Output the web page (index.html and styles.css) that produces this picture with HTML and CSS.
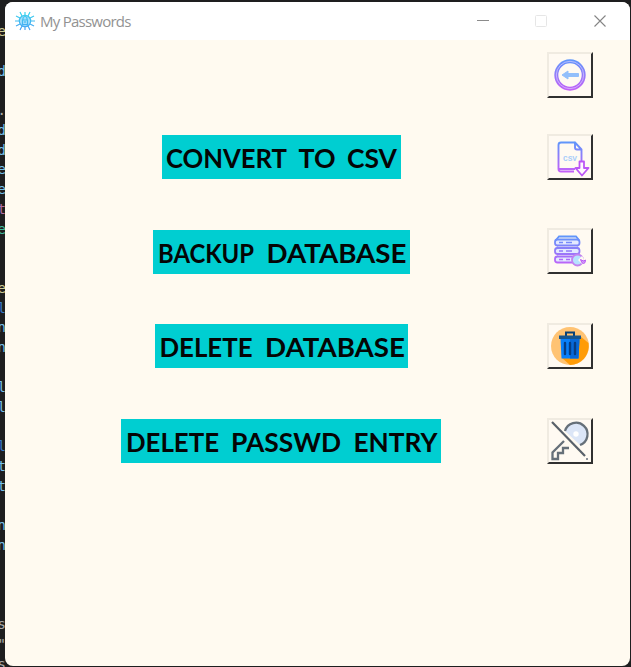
FILE: index.html
```html
<!DOCTYPE html>
<html lang="en">
<head>
<meta charset="utf-8">
<title>My Passwords</title>
<link rel="stylesheet" href="styles.css">
</head>
<body>
<pre class="code" aria-hidden="true"><i class="y">e</i>

<i>d</i>

<b>.</b>
<i>d</i>
<i>d</i>
<i>e</i>
<i>e</i>
<i class="p">t</i>
<i class="g">e</i>


<i class="y">e</i>
<i class="b">l</i>
<i>n</i>
<i>n</i>

<i>l</i>
<i>l</i>

<i class="b">l</i>
<i>t</i>
<i>t</i>

<i>n</i>
<i>n</i>



<b>s</b>
<b>"</b>
<b>s</b></pre>
<main class="window">
  <header class="titlebar">
    <svg class="app-icon" width="20" height="20" viewBox="0 0 20 20" fill="none" stroke="url(#sky)" stroke-width="1.2">
      <defs><linearGradient id="sky" x1="0" y1="0" x2="0" y2="20" gradientUnits="userSpaceOnUse"><stop stop-color="#39d9ec"/><stop offset="1" stop-color="#4b9df5"/></linearGradient></defs>
      <circle cx="10" cy="10" r="5.7" fill="#a5defc"/>
      <path d="M10 4V1M7 5 5 1M13 5l2-4M5 7 1 5M15 7l4-2M4 10H0M16 10h4M5 13l-4 2M15 13l4 2M7 15l-2 4M13 15l2 4M10 16v3"/>
      <path d="M8 9V7.500a2 2 0 0 1 4 0V9M7.500 9h5v4.500h-5zM10 10v2"/>
    </svg>
    <span class="title">My Passwords</span>
    <svg class="controls" width="132" height="14" viewBox="0 0 132 14" fill="none">
      <path d="M0 6.500h12" stroke="#8b8b8b"/>
      <rect x="58.500" y="1.500" width="11" height="11" rx="1" stroke="#e6e6e6"/>
      <path d="m117.500 1.500 11 11m0-11-11 11" stroke="#858585" stroke-width="1.100"/>
    </svg>
  </header>
  <section class="content">
    <div class="row first">
      <button class="tool" aria-label="Back">
        <svg viewBox="0 0 46 46" fill="none">
          <defs><linearGradient id="violet" x1="0" y1="7" x2="0" y2="40" gradientUnits="userSpaceOnUse"><stop stop-color="#5c98fb"/><stop offset="1" stop-color="#cb5cf8"/></linearGradient></defs>
          <circle cx="23" cy="23" r="13.700" stroke="url(#violet)" stroke-width="4"/>
          <circle cx="23" cy="23" r="13.700" stroke="#dccfff" stroke-opacity=".7" stroke-width="1"/>
          <path d="m15 23 6-4v2.500h10.500v3H21V27z" fill="#92bffb" stroke="#92bffb" stroke-linejoin="round"/>
        </svg>
      </button>
    </div>
    <div class="row">
      <div class="label convert"><svg width="239" height="44"><text x="4" y="33" textLength="121" lengthAdjust="spacingAndGlyphs">CONVERT</text><text x="136.500" y="33" textLength="37" lengthAdjust="spacingAndGlyphs">TO</text><text x="185" y="33" textLength="50" lengthAdjust="spacingAndGlyphs">CSV</text></svg></div>
      <button class="tool" aria-label="Convert to CSV">
        <svg viewBox="0 0 46 46" fill="none">
          <path d="M27 37.500H14q-2.500 0-2.500-2.500V11q0-2.500 2.500-2.500h14l6.500 7V27M28 8.500v5q0 2 2 2h4.500zM12 35h16" stroke="url(#violet)" stroke-width="1.900" stroke-linejoin="round"/>
          <text class="csv" x="16" y="27" textLength="14" lengthAdjust="spacingAndGlyphs">CSV</text>
          <path d="M32.500 27.500h4.500V34h4.500L35 41.500 28.500 34h4z" fill="#fff9ff" stroke="#bb57f6" stroke-width="1.800" stroke-linejoin="round"/>
        </svg>
      </button>
    </div>
    <div class="row">
      <div class="label backup"><svg width="257" height="44"><text x="5" y="33" textLength="96" lengthAdjust="spacingAndGlyphs">BACKUP</text><text x="113.500" y="33" textLength="140" lengthAdjust="spacingAndGlyphs">DATABASE</text></svg></div>
      <button class="tool raised" aria-label="Backup database">
        <svg viewBox="0 0 46 46" fill="none" stroke="url(#violet)" stroke-width="1.800">
          <path d="m9 12 3-3.500h17l3 3.500M10 19l2 2h17l2-2M10 28l2 2h17l2-2"/>
          <g fill="#e4eaff"><rect x="8" y="11.500" width="24.500" height="6" rx="2.500"/><rect x="8" y="20" width="24.500" height="6" rx="2.500"/><rect x="8" y="28.500" width="24.500" height="6" rx="2.500"/></g>
          <path d="M12 14.500h4M19 14.500h6M12 23h4M19 23h6M12 31.500h4M19 31.500h4" stroke-width="1.400"/>
          <circle cx="30.500" cy="32" r="5.500" fill="#b5e2ff" stroke="#c283ef"/>
          <path d="m31 32 4-4 2 3-2 5z" fill="#fffaf2" stroke="none"/>
          <path d="M33.500 31.500q1 4 3 4t2-3.500l-2 1z" fill="#d49af9" stroke="#b95af5" stroke-width="1"/>
        </svg>
      </button>
    </div>
    <div class="row">
      <div class="label remove"><svg width="253" height="44"><text x="4.500" y="33" textLength="93" lengthAdjust="spacingAndGlyphs">DELETE</text><text x="110" y="33" textLength="140" lengthAdjust="spacingAndGlyphs">DATABASE</text></svg></div>
      <button class="tool" aria-label="Delete database">
        <svg viewBox="0 0 46 46">
          <circle cx="23" cy="23" r="19" fill="#ffc373"/>
          <path d="M33 13 41.500 20a19 19 0 0 1-18.500 22l-8-7z" fill="#ff9c08"/>
          <path d="M19 13V9.500h8V13" fill="none" stroke="#064177" stroke-width="2"/>
          <path d="M12 12.500h22V16H12z" fill="#15558d"/>
          <path d="M13.500 16h19L31.500 35.500h-17z" fill="#0880fa"/>
          <path d="M23 16h9.500L31.500 35.500H23z" fill="#0768d8"/>
          <path d="M18 20v11M23 20v11M28 20v11" stroke="#063d83" stroke-width="2.400" stroke-linecap="round"/>
        </svg>
      </button>
    </div>
    <div class="row">
      <div class="label entry"><svg width="320" height="44"><text x="5" y="33" textLength="93" lengthAdjust="spacingAndGlyphs">DELETE</text><text x="110" y="33" textLength="110" lengthAdjust="spacingAndGlyphs">PASSWD</text><text x="232.500" y="33" textLength="84" lengthAdjust="spacingAndGlyphs">ENTRY</text></svg></div>
      <button class="tool" aria-label="Delete password entry">
        <svg viewBox="0 0 46 46" fill="none">
          <path d="M18 13a11.500 11.500 0 1 1 15 14z" fill="#dce6f7"/>
          <path d="M18 13a11.500 11.500 0 1 1 15 14M17 23 5.500 34.500V41H11v-6h5v-5h6" stroke="#667079" stroke-width="2.300"/>
          <path d="m5 4 33 34" stroke="#fffaf0" stroke-width="5"/>
          <path d="m5 4 33 34" stroke="#59616a" stroke-width="2.200"/>
          <circle cx="29" cy="16" r="2.700" fill="#fff"/>
          <path d="M39 40h2v2h-2z" fill="#8c9299"/>
        </svg>
      </button>
    </div>
  </section>
</main>
</body>
</html>
```
FILE: styles.css
```css
* { box-sizing: border-box; }
body {
  margin: 0;
  height: 667px;
  padding: 2px 1px 1px 5px;
  overflow: hidden;
  position: relative;
  background: #1e1e1f;
}
.code {
  position: absolute;
  top: 22px;
  left: -2.5px;
  margin: 0;
  font: 14px/19.77px "DejaVu Sans Mono", monospace;
  color: #aaa;
}
.code i { font-style: normal; color: #75bfe8; }
.code b { font-weight: 400; }
.code .y { color: #c9c995; }
.code .p { color: #b06da4; }
.code .g { color: #42b89b; }
.code .b { color: #397cc8; }
.window {
  position: relative;
  height: 664px;
  overflow: hidden;
  border-radius: 8px;
  background: #fffaf0;
}
.titlebar {
  display: flex;
  align-items: center;
  height: 38px;
  padding: 0 21px 0 10px;
  background: #fff;
}
.title {
  margin-left: 5px;
  font: 15px/20px "Open Sans", sans-serif;
  letter-spacing: -.75px;
  color: #929292;
}
.controls { margin-left: auto; }
.content { padding: 12px 38px 0 0; }
.row {
  display: grid;
  grid-template-columns: 542px 46px;
  height: 94.670px;
  align-items: start;
}
.row.first { height: 82.500px; }
.label {
  justify-self: center;
  height: 44px;
  background: #00ced1;
}
.label svg { display: block; overflow: visible; }
.label text {
  font: 700 26.500px "Comic Sans MS", Lato, sans-serif;
  fill: #050505;
}
.convert { width: 239px; margin-right: -11px; }
.backup { width: 257px; margin-right: -11px; margin-top: .8px; }
.remove { width: 253px; margin-right: -10px; }
.entry { width: 320px; margin-right: -10px; margin-top: .5px; }
.tool {
  grid-column: 2;
  width: 46px;
  height: 46px;
  margin-top: -.6px;
  padding: 0;
  border: 2px solid #f0ebe1;
  border-right-color: #303030;
  border-bottom-color: #303030;
  background: #fffaf2;
}
.first .tool { margin-top: 0; }
.tool.raised { margin-top: -1px; }
.tool svg { display: block; width: 46px; height: 46px; margin: -2px; }
.csv { font: 700 8px "Liberation Mono", monospace; fill: #a7cdfa; }
```
